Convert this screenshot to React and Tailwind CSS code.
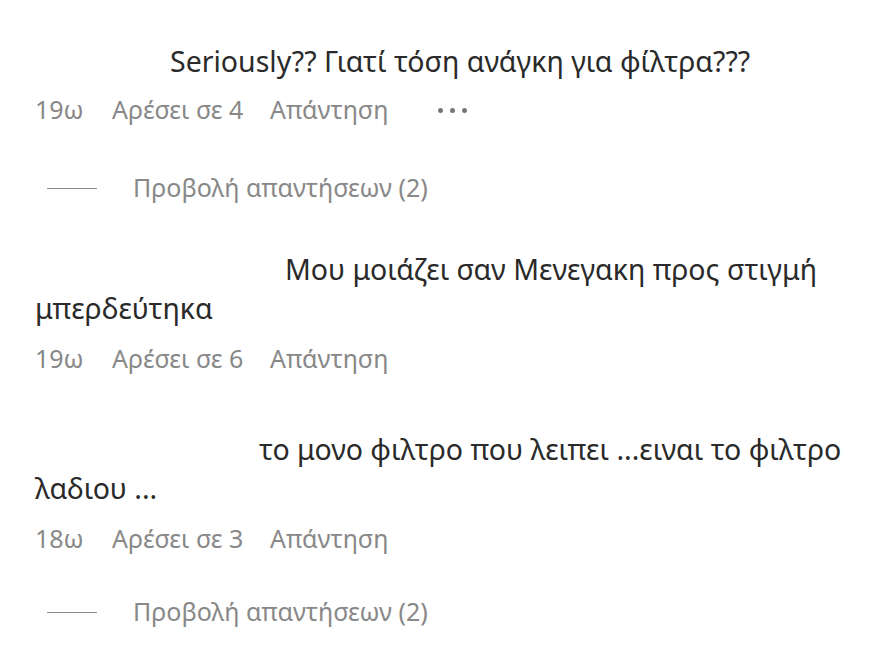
import React from "react";

const font = { fontFamily: '"Noto Sans", "Open Sans", sans-serif' };

function Meta({ age, likes, more }) {
  return (
    <div className="flex items-center h-[30px] text-[25px] text-[#888888] whitespace-nowrap">
      <span className="w-[77px]">{age}</span>
      <span className="w-[158px]">Αρέσει σε {likes}</span>
      <span>Απάντηση</span>
      {more && (
        <span className="ml-[50px] flex gap-[7px] items-center">
          <span className="w-[5px] h-[5px] rounded-full bg-[#777]"></span>
          <span className="w-[5px] h-[5px] rounded-full bg-[#777]"></span>
          <span className="w-[5px] h-[5px] rounded-full bg-[#777]"></span>
        </span>
      )}
    </div>
  );
}

function ViewReplies({ className }) {
  return (
    <div className={"flex items-center h-[30px] text-[25px] text-[#888888] whitespace-nowrap " + className}>
      <span className="ml-[12px] w-[50px] h-px bg-[#8e8e8e]"></span>
      <span className="ml-[36px]">Προβολή απαντήσεων (2)</span>
    </div>
  );
}

function Blur({ w }) {
  return <span className="inline-block h-px bg-transparent" style={{ width: w }}></span>;
}

export default function App() {
  return (
    <div className="w-[880px] h-[669px] bg-white overflow-hidden" style={font}>
      <div className="pl-[35px] pr-[10px] pt-[42px]">
        <div className="text-[28.5px] leading-[39px] text-[#2a2a2a]">
          <Blur w="135px" />
          Seriously?? Γιατί τόση ανάγκη για φίλτρα???
        </div>
        <div className="mt-[14px]">
          <Meta age="19ω" likes="4" more />
        </div>
        <ViewReplies className="mt-[48px]" />

        <div className="mt-[47px] text-[28.5px] leading-[39px] text-[#2a2a2a]">
          <Blur w="250px" />
          Μου μοιάζει σαν Μενεγακη προς στιγμή μπερδεύτηκα
        </div>
        <div className="mt-[16px]">
          <Meta age="19ω" likes="6" />
        </div>

        <div className="mt-[56px] text-[28.5px] leading-[39px] text-[#2a2a2a]">
          <Blur w="224px" />
          το μονο φιλτρο που λειπει ...ειναι το φιλτρο λαδιου ...
        </div>
        <div className="mt-[16px]">
          <Meta age="18ω" likes="3" />
        </div>
        <ViewReplies className="mt-[43px]" />
      </div>
    </div>
  );
}
